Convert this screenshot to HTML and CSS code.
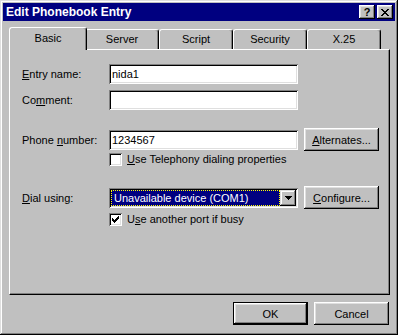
FILE: index.html
```html
<!DOCTYPE html>
<html lang="en">
<head>
    <meta charset="UTF-8">
    <title>Edit Phonebook Entry</title>
    <link rel="stylesheet" href="styles.css">
</head>
<body>

    <div class="window">
        <div class="titlebar">
            <span class="title">Edit Phonebook Entry</span>
            <div class="title-buttons">
                <button class="title-btn help-btn">?</button>
                <button class="title-btn">
                    <svg width="8" height="7" viewBox="0 0 8 7"><path d="M0 0h2v1h-2zM6 0h2v1h-2zM1 1h2v1h-2zM5 1h2v1h-2zM2 2h4v1h-4zM3 3h2v1h-2zM2 4h4v1h-4zM1 5h2v1h-2zM5 5h2v1h-2zM0 6h2v1h-2zM6 6h2v1h-2z" fill="#000"/></svg>
                </button>
            </div>
        </div>

        <div class="dialog-body">
            <div class="tabs">
                <div class="tab active">Basic</div>
                <div class="tab">Server</div>
                <div class="tab">Script</div>
                <div class="tab">Security</div>
                <div class="tab">X.25</div>
            </div>

            <div class="panel">
                <div class="row">
                    <span class="field-label"><u>E</u>ntry name:</span>
                    <div class="textbox">nida1</div>
                </div>
                <div class="row row-comment">
                    <span class="field-label">Co<u>m</u>ment:</span>
                    <div class="textbox"></div>
                </div>
                <div class="row row-phone">
                    <span class="field-label">Phone <u>n</u>umber:</span>
                    <div class="textbox">1234567</div>
                    <button class="btn side-btn"><u>A</u>lternates...</button>
                </div>
                <div class="row row-check indent">
                    <span class="checkbox"></span>
                    <span class="check-label"><u>U</u>se Telephony dialing properties</span>
                </div>
                <div class="row row-dial">
                    <span class="field-label"><u>D</u>ial using:</span>
                    <div class="combo">
                        <div class="combo-value">Unavailable device (COM1)</div>
                        <div class="combo-button">
                            <svg width="7" height="4" viewBox="0 0 7 4"><path d="M0 0h7v1h-1v1h-1v1h-1v1h-1v-1h-1v-1h-1v-1h-1z" fill="#000"/></svg>
                        </div>
                    </div>
                    <button class="btn side-btn"><u>C</u>onfigure...</button>
                </div>
                <div class="row row-busy indent">
                    <span class="checkbox">
                        <svg width="7" height="7" viewBox="0 0 7 7"><path d="M6 0h1v1h-1zM5 1h2v1h-2zM0 2h1v1h-1zM4 2h3v1h-3zM0 3h2v1h-2zM3 3h3v1h-3zM0 4h5v1h-5zM1 5h3v1h-3zM2 6h1v1h-1z" fill="#000"/></svg>
                    </span>
                    <span class="check-label">U<u>s</u>e another port if busy</span>
                </div>
            </div>

            <div class="footer">
                <button class="btn default">OK</button>
                <button class="btn">Cancel</button>
            </div>
        </div>
    </div>

</body>
</html>
```

FILE: styles.css
```css
/* Win98 style dialog */
body {
    margin: 0;
    background-color: #c0c0c0;
}

.window {
    width: 398px;
    height: 335px;
    box-sizing: border-box;
    padding: 3px;
    display: flex;
    flex-direction: column;
    background-color: #c0c0c0;
    box-shadow: inset -1px -1px #000, inset 1px 1px #dfdfdf, inset -2px -2px #808080, inset 2px 2px #fff;
    font-family: "Liberation Sans", Arial, sans-serif;
    font-size: 11px;
    color: #000;
}

.titlebar {
    height: 18px;
    display: flex;
    align-items: center;
    justify-content: space-between;
    padding: 0 2px 0 3px;
    background-color: #000080;
    color: #fff;
}

.title {
    font-weight: bold;
    font-size: 12px;
}

.title-buttons {
    display: flex;
    gap: 2px;
}

.title-btn {
    width: 16px;
    height: 14px;
    box-sizing: border-box;
    border: none;
    padding: 0;
    display: flex;
    align-items: center;
    justify-content: center;
    background-color: #c0c0c0;
    box-shadow: inset -1px -1px #000, inset 1px 1px #fff, inset -2px -2px #808080, inset 2px 2px #dfdfdf;
}

.help-btn {
    font-family: "Liberation Sans", Arial, sans-serif;
    font-weight: bold;
    font-size: 11px;
    color: #000;
    line-height: 12px;
}

.dialog-body {
    flex: 1;
    display: flex;
    flex-direction: column;
    padding: 6px 5px 0 6px;
}

/* tabs */
.tabs {
    height: 22px;
    display: flex;
    align-items: flex-end;
    padding-left: 2px;
}

.tab {
    width: 74px;
    height: 20px;
    box-sizing: border-box;
    border-top: 1px solid #fff;
    border-left: 1px solid #fff;
    border-right: 1px solid #000;
    border-radius: 3px 3px 0 0;
    box-shadow: inset -1px 0 #808080;
    text-align: center;
    line-height: 18px;
}

.tab.active {
    position: relative;
    z-index: 1;
    width: 78px;
    height: 23px;
    margin: 0 -2px -1px -2px;
    background-color: #c0c0c0;
    line-height: 20px;
}

.panel {
    height: 246px;
    box-sizing: border-box;
    padding: 14px 0 0 12px;
    border-top: 1px solid #fff;
    border-left: 1px solid #fff;
    border-right: 1px solid #000;
    border-bottom: 1px solid #000;
    box-shadow: inset -1px -1px #808080;
}

/* form rows */
.row {
    display: flex;
    align-items: center;
}

.row-comment {
    margin-top: 6px;
}

.row-phone {
    margin-top: 18px;
}

.row-check {
    margin-top: 2px;
}

.row-dial {
    margin-top: 20px;
}

.row-busy {
    margin-top: 4px;
}

.indent {
    padding-left: 87px;
    height: 13px;
}

.field-label {
    width: 87px;
}

.textbox {
    width: 189px;
    height: 20px;
    box-sizing: border-box;
    padding: 0 3px;
    display: flex;
    align-items: center;
    background-color: #fff;
    box-shadow: inset 1px 1px #808080, inset -1px -1px #fff, inset 2px 2px #000, inset -2px -2px #dfdfdf;
}

.checkbox {
    width: 13px;
    height: 13px;
    box-sizing: border-box;
    display: flex;
    align-items: center;
    justify-content: center;
    background-color: #fff;
    box-shadow: inset 1px 1px #808080, inset -1px -1px #fff, inset 2px 2px #000, inset -2px -2px #dfdfdf;
}

.check-label {
    margin-left: 5px;
    line-height: 13px;
}

/* dropdown */
.combo {
    width: 189px;
    height: 20px;
    box-sizing: border-box;
    padding: 2px;
    display: flex;
    background-color: #fff;
    box-shadow: inset 1px 1px #808080, inset -1px -1px #fff, inset 2px 2px #000, inset -2px -2px #dfdfdf;
}

.combo-value {
    flex: 1;
    box-sizing: border-box;
    padding-left: 2px;
    border: 1px dotted #ffff00;
    background-color: #000080;
    color: #fff;
    line-height: 14px;
    white-space: nowrap;
}

.combo-button {
    width: 16px;
    height: 16px;
    box-sizing: border-box;
    display: flex;
    align-items: center;
    justify-content: center;
    background-color: #c0c0c0;
    box-shadow: inset -1px -1px #000, inset 1px 1px #dfdfdf, inset -2px -2px #808080, inset 2px 2px #fff;
}

/* buttons */
.btn {
    width: 75px;
    height: 23px;
    box-sizing: border-box;
    border: none;
    padding: 0;
    background-color: #c0c0c0;
    box-shadow: inset -1px -1px #000, inset 1px 1px #fff, inset -2px -2px #808080, inset 2px 2px #dfdfdf;
    font-family: inherit;
    font-size: 11px;
    color: #000;
}

.btn.default {
    border: 1px solid #000;
}

.side-btn {
    margin-left: 6px;
}

.footer {
    display: flex;
    justify-content: flex-end;
    gap: 6px;
    margin-top: 7px;
    padding-right: 1px;
}
```
